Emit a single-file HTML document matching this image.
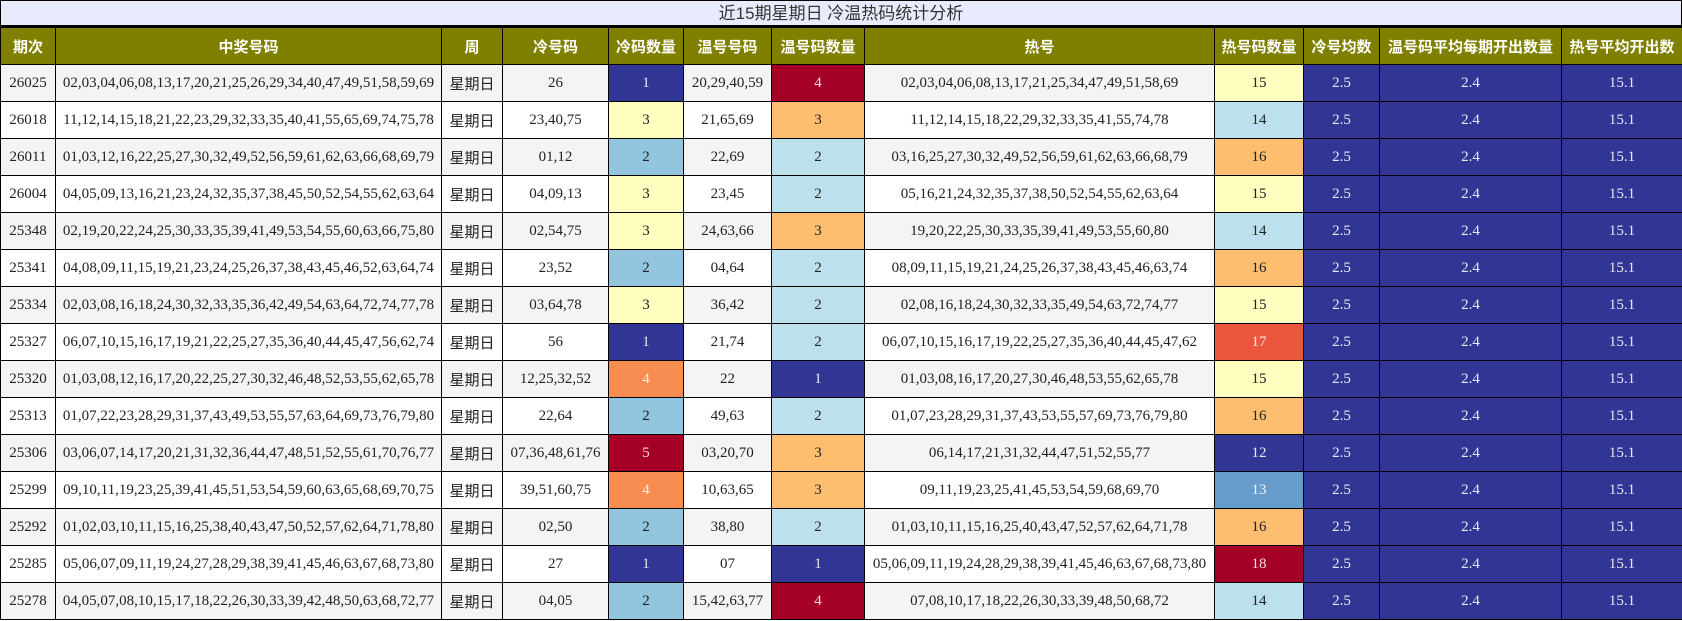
<!DOCTYPE html>
<html><head><meta charset="utf-8">
<style>
html,body{margin:0;padding:0;background:#fff;}
body{width:1682px;height:621px;overflow:hidden;}
.title{height:27px;box-sizing:border-box;border:1px solid #000;border-bottom:2px solid #000;background:#e8ebfc;text-align:center;font:17px/25px "Liberation Sans","Noto Sans CJK SC",sans-serif;color:#333;}
table{border-collapse:collapse;table-layout:fixed;width:1682px;font-family:"Liberation Serif","Noto Serif CJK SC",serif;font-size:15px;color:#222;}
td,th{border:1px solid #000;text-align:center;padding:0;white-space:nowrap;overflow:hidden;}
th{background:#808000;color:#fff;font:bold 15px "Liberation Sans","Noto Sans CJK SC",sans-serif;height:36px;}
td{height:36px;}
tr:nth-child(even) td{background:#f4f4f4;}
tr:nth-child(odd) td{background:#fff;}
td.w{font-family:"Noto Sans CJK SC",sans-serif;font-size:15px;}
tr td.db{background:#313695;color:#e8e8f0;}
tr td.dr{background:#a50026;color:#f4dde2;}
tr td.o4{background:#f88d52;color:#fbeee5;}
tr td.rr{background:#ea573c;color:#fbe6e0;}
tr td.o3{background:#fdbf6f;}
tr td.ly{background:#ffffc0;}
tr td.lb{background:#bde1ec;}
tr td.mb{background:#92c5de;}
tr td.bb{background:#669ccb;color:#eef;}
</style></head><body>
<div class="title">近15期星期日 冷温热码统计分析</div>
<table>
<colgroup><col style="width:55px"><col style="width:386px"><col style="width:61px"><col style="width:106px"><col style="width:75px"><col style="width:88px"><col style="width:93px"><col style="width:350px"><col style="width:89px"><col style="width:76px"><col style="width:182px"><col style="width:121px"></colgroup>
<tr><th>期次</th><th>中奖号码</th><th>周</th><th>冷号码</th><th>冷码数量</th><th>温号号码</th><th>温号码数量</th><th>热号</th><th>热号码数量</th><th>冷号均数</th><th>温号码平均每期开出数量</th><th>热号平均开出数</th></tr>
<tr><td>26025</td><td>02,03,04,06,08,13,17,20,21,25,26,29,34,40,47,49,51,58,59,69</td><td class="w">星期日</td><td>26</td><td class="db">1</td><td>20,29,40,59</td><td class="dr">4</td><td>02,03,04,06,08,13,17,21,25,34,47,49,51,58,69</td><td class="ly">15</td><td class="db">2.5</td><td class="db">2.4</td><td class="db">15.1</td></tr>
<tr><td>26018</td><td>11,12,14,15,18,21,22,23,29,32,33,35,40,41,55,65,69,74,75,78</td><td class="w">星期日</td><td>23,40,75</td><td class="ly">3</td><td>21,65,69</td><td class="o3">3</td><td>11,12,14,15,18,22,29,32,33,35,41,55,74,78</td><td class="lb">14</td><td class="db">2.5</td><td class="db">2.4</td><td class="db">15.1</td></tr>
<tr><td>26011</td><td>01,03,12,16,22,25,27,30,32,49,52,56,59,61,62,63,66,68,69,79</td><td class="w">星期日</td><td>01,12</td><td class="mb">2</td><td>22,69</td><td class="lb">2</td><td>03,16,25,27,30,32,49,52,56,59,61,62,63,66,68,79</td><td class="o3">16</td><td class="db">2.5</td><td class="db">2.4</td><td class="db">15.1</td></tr>
<tr><td>26004</td><td>04,05,09,13,16,21,23,24,32,35,37,38,45,50,52,54,55,62,63,64</td><td class="w">星期日</td><td>04,09,13</td><td class="ly">3</td><td>23,45</td><td class="lb">2</td><td>05,16,21,24,32,35,37,38,50,52,54,55,62,63,64</td><td class="ly">15</td><td class="db">2.5</td><td class="db">2.4</td><td class="db">15.1</td></tr>
<tr><td>25348</td><td>02,19,20,22,24,25,30,33,35,39,41,49,53,54,55,60,63,66,75,80</td><td class="w">星期日</td><td>02,54,75</td><td class="ly">3</td><td>24,63,66</td><td class="o3">3</td><td>19,20,22,25,30,33,35,39,41,49,53,55,60,80</td><td class="lb">14</td><td class="db">2.5</td><td class="db">2.4</td><td class="db">15.1</td></tr>
<tr><td>25341</td><td>04,08,09,11,15,19,21,23,24,25,26,37,38,43,45,46,52,63,64,74</td><td class="w">星期日</td><td>23,52</td><td class="mb">2</td><td>04,64</td><td class="lb">2</td><td>08,09,11,15,19,21,24,25,26,37,38,43,45,46,63,74</td><td class="o3">16</td><td class="db">2.5</td><td class="db">2.4</td><td class="db">15.1</td></tr>
<tr><td>25334</td><td>02,03,08,16,18,24,30,32,33,35,36,42,49,54,63,64,72,74,77,78</td><td class="w">星期日</td><td>03,64,78</td><td class="ly">3</td><td>36,42</td><td class="lb">2</td><td>02,08,16,18,24,30,32,33,35,49,54,63,72,74,77</td><td class="ly">15</td><td class="db">2.5</td><td class="db">2.4</td><td class="db">15.1</td></tr>
<tr><td>25327</td><td>06,07,10,15,16,17,19,21,22,25,27,35,36,40,44,45,47,56,62,74</td><td class="w">星期日</td><td>56</td><td class="db">1</td><td>21,74</td><td class="lb">2</td><td>06,07,10,15,16,17,19,22,25,27,35,36,40,44,45,47,62</td><td class="rr">17</td><td class="db">2.5</td><td class="db">2.4</td><td class="db">15.1</td></tr>
<tr><td>25320</td><td>01,03,08,12,16,17,20,22,25,27,30,32,46,48,52,53,55,62,65,78</td><td class="w">星期日</td><td>12,25,32,52</td><td class="o4">4</td><td>22</td><td class="db">1</td><td>01,03,08,16,17,20,27,30,46,48,53,55,62,65,78</td><td class="ly">15</td><td class="db">2.5</td><td class="db">2.4</td><td class="db">15.1</td></tr>
<tr><td>25313</td><td>01,07,22,23,28,29,31,37,43,49,53,55,57,63,64,69,73,76,79,80</td><td class="w">星期日</td><td>22,64</td><td class="mb">2</td><td>49,63</td><td class="lb">2</td><td>01,07,23,28,29,31,37,43,53,55,57,69,73,76,79,80</td><td class="o3">16</td><td class="db">2.5</td><td class="db">2.4</td><td class="db">15.1</td></tr>
<tr><td>25306</td><td>03,06,07,14,17,20,21,31,32,36,44,47,48,51,52,55,61,70,76,77</td><td class="w">星期日</td><td>07,36,48,61,76</td><td class="dr">5</td><td>03,20,70</td><td class="o3">3</td><td>06,14,17,21,31,32,44,47,51,52,55,77</td><td class="db">12</td><td class="db">2.5</td><td class="db">2.4</td><td class="db">15.1</td></tr>
<tr><td>25299</td><td>09,10,11,19,23,25,39,41,45,51,53,54,59,60,63,65,68,69,70,75</td><td class="w">星期日</td><td>39,51,60,75</td><td class="o4">4</td><td>10,63,65</td><td class="o3">3</td><td>09,11,19,23,25,41,45,53,54,59,68,69,70</td><td class="bb">13</td><td class="db">2.5</td><td class="db">2.4</td><td class="db">15.1</td></tr>
<tr><td>25292</td><td>01,02,03,10,11,15,16,25,38,40,43,47,50,52,57,62,64,71,78,80</td><td class="w">星期日</td><td>02,50</td><td class="mb">2</td><td>38,80</td><td class="lb">2</td><td>01,03,10,11,15,16,25,40,43,47,52,57,62,64,71,78</td><td class="o3">16</td><td class="db">2.5</td><td class="db">2.4</td><td class="db">15.1</td></tr>
<tr><td>25285</td><td>05,06,07,09,11,19,24,27,28,29,38,39,41,45,46,63,67,68,73,80</td><td class="w">星期日</td><td>27</td><td class="db">1</td><td>07</td><td class="db">1</td><td>05,06,09,11,19,24,28,29,38,39,41,45,46,63,67,68,73,80</td><td class="dr">18</td><td class="db">2.5</td><td class="db">2.4</td><td class="db">15.1</td></tr>
<tr><td>25278</td><td>04,05,07,08,10,15,17,18,22,26,30,33,39,42,48,50,63,68,72,77</td><td class="w">星期日</td><td>04,05</td><td class="mb">2</td><td>15,42,63,77</td><td class="dr">4</td><td>07,08,10,17,18,22,26,30,33,39,48,50,68,72</td><td class="lb">14</td><td class="db">2.5</td><td class="db">2.4</td><td class="db">15.1</td></tr>
</table>
</body></html>
